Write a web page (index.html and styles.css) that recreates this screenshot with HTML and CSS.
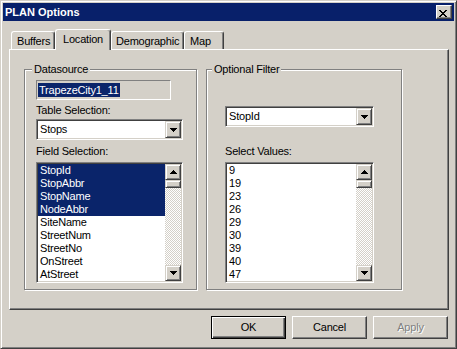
FILE: index.html
```html
<!DOCTYPE html>
<html>
<head>
    <meta charset="utf-8">
    <meta name="viewport" content="width=device-width, initial-scale=1">
    <title>PLAN Options</title>
    <link rel="stylesheet" href="styles.css">
</head>
<body>
    <div class="window">
        <div class="titlebar">
            <span class="title">PLAN Options</span>
            <button class="close-button" title="Close">
                <svg width="8" height="7" viewBox="0 0 8 7" shape-rendering="crispEdges">
                    <path d="M0 0h2v1H0zM6 0h2v1H6zM1 1h2v1H1zM5 1h2v1H5zM2 2h4v1H2zM3 3h2v1H3zM2 4h4v1H2zM1 5h2v1H1zM5 5h2v1H5zM0 6h2v1H0zM6 6h2v1H6z"/>
                </svg>
            </button>
        </div>

        <div class="tabs">
            <div class="tab tab-buffers">Buffers</div>
            <div class="tab tab-location active">Location</div>
            <div class="tab tab-demographic">Demographic</div>
            <div class="tab tab-map">Map</div>
        </div>

        <div class="panel">
            <fieldset class="group group-datasource">
                <legend>Datasource</legend>
                <div class="group-body">
                    <div class="readonly-edit"><span class="selected-text">TrapezeCity1_11</span></div>
                    <div class="field-label label-table">Table Selection:</div>
                    <div class="combo">
                        <span class="combo-value">Stops</span>
                        <span class="combo-button">
                            <svg width="7" height="4" viewBox="0 0 7 4" shape-rendering="crispEdges"><path d="M0 0h7v1H0zM1 1h5v1H1zM2 2h3v1H2zM3 3h1v1H3z"/></svg>
                        </span>
                    </div>
                    <div class="field-label label-list">Field Selection:</div>
                    <div class="list">
                        <ul class="list-items">
                            <li class="selected">StopId</li>
                            <li class="selected">StopAbbr</li>
                            <li class="selected">StopName</li>
                            <li class="selected">NodeAbbr</li>
                            <li>SiteName</li>
                            <li>StreetNum</li>
                            <li>StreetNo</li>
                            <li>OnStreet</li>
                            <li>AtStreet</li>
                        </ul>
                        <div class="scrollbar">
                            <span class="scroll-button">
                                <svg width="7" height="4" viewBox="0 0 7 4" shape-rendering="crispEdges"><path d="M3 0h1v1H3zM2 1h3v1H2zM1 2h5v1H1zM0 3h7v1H0z"/></svg>
                            </span>
                            <span class="scroll-thumb"></span>
                            <span class="scroll-track"></span>
                            <span class="scroll-button">
                                <svg width="7" height="4" viewBox="0 0 7 4" shape-rendering="crispEdges"><path d="M0 0h7v1H0zM1 1h5v1H1zM2 2h3v1H2zM3 3h1v1H3z"/></svg>
                            </span>
                        </div>
                    </div>
                </div>
            </fieldset>

            <fieldset class="group group-filter">
                <legend>Optional Filter</legend>
                <div class="group-body">
                    <div class="combo combo-filter">
                        <span class="combo-value">StopId</span>
                        <span class="combo-button">
                            <svg width="7" height="4" viewBox="0 0 7 4" shape-rendering="crispEdges"><path d="M0 0h7v1H0zM1 1h5v1H1zM2 2h3v1H2zM3 3h1v1H3z"/></svg>
                        </span>
                    </div>
                    <div class="field-label label-values">Select Values:</div>
                    <div class="list">
                        <ul class="list-items">
                            <li>9</li>
                            <li>19</li>
                            <li>23</li>
                            <li>26</li>
                            <li>29</li>
                            <li>30</li>
                            <li>39</li>
                            <li>40</li>
                            <li>47</li>
                        </ul>
                        <div class="scrollbar">
                            <span class="scroll-button">
                                <svg width="7" height="4" viewBox="0 0 7 4" shape-rendering="crispEdges"><path d="M3 0h1v1H3zM2 1h3v1H2zM1 2h5v1H1zM0 3h7v1H0z"/></svg>
                            </span>
                            <span class="scroll-thumb"></span>
                            <span class="scroll-track"></span>
                            <span class="scroll-button">
                                <svg width="7" height="4" viewBox="0 0 7 4" shape-rendering="crispEdges"><path d="M0 0h7v1H0zM1 1h5v1H1zM2 2h3v1H2zM3 3h1v1H3z"/></svg>
                            </span>
                        </div>
                    </div>
                </div>
            </fieldset>
        </div>

        <div class="dialog-buttons">
            <button class="dialog-button default">OK</button>
            <button class="dialog-button">Cancel</button>
            <button class="dialog-button" disabled>Apply</button>
        </div>
    </div>
</body>
</html>
```

FILE: styles.css
```css
body {
    margin: 0;
    font-family: "Liberation Sans", Arial, sans-serif;
    font-size: 11px;
    line-height: 13px;
    letter-spacing: -0.2px;
    color: #000;
    background-color: #d4d0c8;
}
button {
    font-family: inherit;
    font-size: inherit;
    letter-spacing: inherit;
    line-height: 13px;
    margin: 0;
    padding: 0;
    color: #000;
    background-color: #d4d0c8;
}
.window {
    width: 457px;
    height: 349px;
    box-sizing: border-box;
    padding: 2px;
    border: 1px solid;
    border-color: #d4d0c8 #404040 #404040 #d4d0c8;
    box-shadow: inset 1px 1px #fff, inset -1px -1px #808080;
}
.titlebar {
    height: 18px;
    display: flex;
    align-items: center;
    justify-content: space-between;
    padding: 0 2px;
    background-color: #08206a;
    color: #fff;
}
.title {
    font-weight: bold;
    letter-spacing: 0;
}
.close-button {
    box-sizing: border-box;
    width: 16px;
    height: 14px;
    padding: 2px 0 0 2px;
    border: 1px solid;
    border-color: #fff #404040 #404040 #fff;
    box-shadow: inset -1px -1px #808080;
}
.close-button svg {
    display: block;
}

/* tabs */
.tabs {
    display: flex;
    align-items: flex-end;
    margin: 8px 0 0 8px;
}
.tab {
    box-sizing: border-box;
    height: 18px;
    padding-top: 3px;
    border: 1px solid #fff;
    border-bottom: none;
    border-right-color: #404040;
    border-radius: 3px 3px 0 0;
    box-shadow: inset -1px 0 #808080;
    background-color: #d4d0c8;
    white-space: nowrap;
}
.tab.active {
    height: 21px;
    margin-bottom: -1px;
    position: relative;
    z-index: 1;
}
.tab-buffers {
    width: 44px;
    padding-left: 5px;
}
.tab-location {
    width: 56px;
    padding-left: 7px;
}
.tab-demographic {
    width: 73px;
    padding-left: 4px;
}
.tab-map {
    width: 40px;
    padding-left: 5px;
}
.panel {
    box-sizing: border-box;
    width: 440px;
    height: 261px;
    margin-left: 6px;
    padding: 13px 0 0 14px;
    display: flex;
    align-items: flex-start;
    gap: 9px;
    border: 1px solid;
    border-color: #fff #404040 #404040 #fff;
    box-shadow: inset -1px -1px #808080;
}

/* group boxes */
.group {
    box-sizing: border-box;
    margin: 0;
    padding: 0 0 6px;
    min-width: 0;
    border: 1px solid #808080;
    box-shadow: 1px 1px #fff, inset 1px 1px #fff;
}
.group legend {
    padding: 0 2px;
    line-height: 13px;
    background-color: #d4d0c8;
}
.group-datasource {
    width: 173px;
}
.group-datasource legend {
    margin-left: 7px;
}
.group-datasource .group-body {
    padding-left: 11px;
}
.group-filter {
    width: 196px;
}
.group-filter legend {
    margin-left: 5px;
}
.group-filter .group-body {
    padding-left: 18px;
}

/* controls */
.readonly-edit {
    box-sizing: border-box;
    display: flex;
    align-items: flex-start;
    width: 135px;
    height: 20px;
    margin-top: 4px;
    padding: 2px 0 0 1px;
    border: 1px solid;
    border-color: #808080 #fff #fff #808080;
}
.selected-text {
    padding: 0 1px;
    line-height: 14px;
    background-color: #0a246a;
    color: #fff;
}
.field-label {
    white-space: nowrap;
}
.label-table {
    margin-top: 4px;
}
.label-list {
    margin-top: 5px;
}
.label-values {
    margin-top: 18px;
}
.combo {
    box-sizing: border-box;
    display: flex;
    width: 147px;
    height: 21px;
    margin-top: 2px;
    padding: 1px;
    border: 1px solid;
    border-color: #808080 #fff #fff #808080;
    box-shadow: inset 1px 1px #404040, inset -1px -1px #d4d0c8;
    background-color: #fff;
}
.combo-filter {
    width: 149px;
    margin-top: 30px;
}
.combo-value {
    flex: 1;
    align-self: center;
    padding-left: 2px;
}
.combo-button,
.scroll-button,
.scroll-thumb {
    box-sizing: border-box;
    display: flex;
    align-items: center;
    justify-content: center;
    width: 16px;
    border: 1px solid;
    border-color: #d4d0c8 #404040 #404040 #d4d0c8;
    box-shadow: inset 1px 1px #fff, inset -1px -1px #808080;
    background-color: #d4d0c8;
}
.combo-button {
    height: 17px;
}
.list {
    box-sizing: border-box;
    display: flex;
    width: 147px;
    height: 121px;
    margin-top: 4px;
    padding: 1px;
    border: 1px solid;
    border-color: #808080 #fff #fff #808080;
    box-shadow: inset 1px 1px #404040, inset -1px -1px #d4d0c8;
    background-color: #fff;
}
.group-filter .list {
    width: 149px;
}
.list-items {
    flex: 1;
    margin: 0;
    padding: 0;
    list-style: none;
    overflow: hidden;
}
.list-items li {
    height: 13px;
    padding-left: 2px;
    white-space: nowrap;
}
.list-items li.selected {
    background-color: #0a246a;
    color: #fff;
}
.scrollbar {
    display: flex;
    flex-direction: column;
    width: 16px;
}
.scroll-button {
    height: 16px;
    flex-shrink: 0;
}
.scroll-thumb {
    height: 8px;
    flex-shrink: 0;
}
.scroll-track {
    flex: 1;
    background-color: #fff;
    background-image: conic-gradient(#d4d0c8 25%, transparent 0 50%, #d4d0c8 0 75%, transparent 0);
    background-size: 2px 2px;
}
svg {
    display: block;
}

/* dialog buttons */
.dialog-buttons {
    display: flex;
    justify-content: flex-end;
    gap: 6px;
    margin-top: 6px;
    padding-right: 6px;
}
.dialog-button {
    box-sizing: border-box;
    width: 75px;
    height: 23px;
    border: 1px solid;
    border-color: #fff #404040 #404040 #fff;
    box-shadow: inset -1px -1px #808080;
}
.dialog-button.default {
    border-color: #000;
    box-shadow: inset 1px 1px #fff, inset -1px -1px #404040, inset -2px -2px #808080;
}
.dialog-button:disabled {
    color: #808080;
    text-shadow: 1px 1px #fff;
}
```
